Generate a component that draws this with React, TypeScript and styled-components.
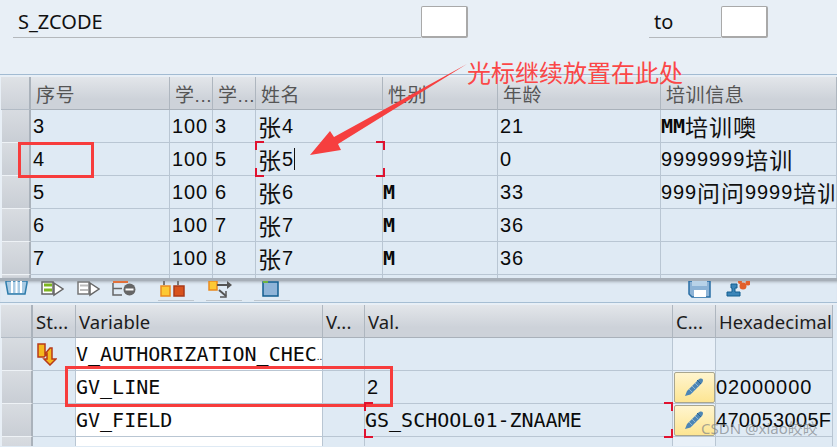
import React from "react";
import styled, { createGlobalStyle } from "styled-components";

const GlobalStyle = createGlobalStyle`
html, body {
  margin: 0;
  padding: 0;
  background: #dfeaf4;
}
`;

const sans = `"Liberation Sans", "Noto Sans CJK SC", sans-serif`;
const mono = `"DejaVu Sans Mono", "Noto Sans CJK SC", monospace`;
const label = `"Noto Sans", "Noto Sans CJK SC", sans-serif`;

const topCols = "31px 139px 43px 43px 127px 115px 163px 176px";
const bottomCols = "33px 43px 247px 42px 308px 43px 117px 4px";

const topRows = [
  ["3", "3", "张", "4", "", "21", "MM", "培训噢"],
  ["4", "5", "张", "5", "", "0", "9999999", "培训"],
  ["5", "6", "张", "6", "M", "33", "999", "问问", "9999", "培训"],
  ["6", "7", "张", "7", "M", "36"],
  ["7", "8", "张", "7", "M", "36"],
];

const App = () => {
  return (
    <>
      <GlobalStyle />
      <Page>
        <FilterBar>
          <FieldLabel $width={408} $pad={5}>S_ZCODE</FieldLabel>
          <FieldInput />
          <FieldLabel $width={72} $pad={5} $left={181}>to</FieldLabel>
          <FieldInput />
        </FilterBar>

        <TopTable>
          <HeadRow $cols={topCols}>
            <Corner />
            <HeadHan>序号</HeadHan>
            <HeadHan>学...</HeadHan>
            <HeadHan>学...</HeadHan>
            <HeadHan>姓名</HeadHan>
            <HeadHan>性别</HeadHan>
            <HeadHan>年龄</HeadHan>
            <HeadHan>培训信息</HeadHan>
          </HeadRow>
          {topRows.map((r) => (
            <Row key={r[0]} $cols={topCols}>
              <RowHead />
              <Cell><Digits>{r[0]}</Digits></Cell>
              <Cell><Digits>100</Digits></Cell>
              <Cell><Digits>{r[1]}</Digits></Cell>
              <Cell>
                <Han>{r[2]}</Han>
                <Digits>{r[3]}</Digits>
                {r[0] === "4" && <Caret />}
              </Cell>
              <Cell $flush><Bold>{r[4]}</Bold></Cell>
              <Cell><Digits>{r[5]}</Digits></Cell>
              <Cell $flush>
                {r[0] === "3" && <><Bold>{r[6]}</Bold><Han>{r[7]}</Han></>}
                {r[0] === "4" && <><Digits>{r[6]}</Digits><Han>{r[7]}</Han></>}
                {r[0] === "5" && (
                  <>
                    <Digits>{r[6]}</Digits>
                    <Han>{r[7]}</Han>
                    <Digits>{r[8]}</Digits>
                    <Han>{r[9]}</Han>
                  </>
                )}
              </Cell>
            </Row>
          ))}
          <StubRow $cols={topCols}>
            <RowHead />
            <Cell /><Cell /><Cell /><Cell /><Cell /><Cell /><Cell />
          </StubRow>
        </TopTable>

        <Toolbar>
          <Tool $left={5} width="23" height="19" viewBox="0 0 23 19">
            <path d="M1 0h21v2l-2 11H3L1 2z" fill="#a9cbe4" stroke="#2e7cab" strokeWidth="1.5" />
            <path d="M7 0v12M11.500 0v12M16 0v12" stroke="#fff" strokeWidth="2" />
          </Tool>
          <Tool $left={13} width="23" height="19" viewBox="0 0 23 19">
            <path d="M1 1h11v12H1z" fill="#fff" stroke="#666" strokeWidth="1.5" />
            <path d="M3 2.500h8v3H3zM3 7.500h8v3H3z" fill="#7db51f" />
            <path d="M13 2l9 6-9 6z" fill="#fff" stroke="#666" strokeWidth="1.5" />
          </Tool>
          <Tool $left={13} width="23" height="19" viewBox="0 0 23 19">
            <path d="M1 1h11v12H1z" fill="#fff" stroke="#777" strokeWidth="1.5" />
            <path d="M3 3.500h8v2H3zM3 8h8v2H3z" fill="#bbb" />
            <path d="M13 2l9 6-9 6z" fill="#fff" stroke="#666" strokeWidth="1.5" />
          </Tool>
          <Tool $left={12} width="24" height="19" viewBox="0 0 24 19">
            <path d="M1 1h15" stroke="#e2703a" strokeWidth="2" />
            <path d="M1 2v12h9M1 7.500h9" fill="none" stroke="#666" strokeWidth="1.500" />
            <circle cx="17.500" cy="8.500" r="6" fill="#666" />
            <path d="M13.500 8.500h8" stroke="#fff" strokeWidth="2" />
          </Tool>
          <ToolGroup $left={22} $pad={2}>
            <Tool width="25" height="19" viewBox="0 0 25 19">
              <path d="M4 0v4M18 0v4" stroke="#777" strokeWidth="2" />
              <path d="M1 5h9v10H1z" fill="#fcc935" stroke="#ea8a1e" strokeWidth="1.500" />
              <path d="M14 5h10v10H14z" fill="#d8521c" stroke="#a93a18" strokeWidth="1.500" />
            </Tool>
          </ToolGroup>
          <ToolGroup $left={12} $pad={2}>
            <Tool width="25" height="19" viewBox="0 0 25 19">
              <path d="M1 0h8v9H1z" fill="#fcc935" stroke="#ea8a1e" strokeWidth="1.500" />
              <path d="M9 4h11" stroke="#555" strokeWidth="2" />
              <path d="M19 0l5 4-5 4z" fill="#555" />
              <path d="M11 9l7 6" stroke="#555" strokeWidth="2" />
              <path d="M18 10v6h-6" fill="none" stroke="#555" strokeWidth="1.500" />
            </Tool>
          </ToolGroup>
          <ToolGroup $left={12} $pad={8}>
            <Tool width="17" height="19" viewBox="0 0 17 19">
              <path d="M1 1h15v14H1z" fill="#8fb4d8" stroke="#135e90" strokeWidth="1.500" />
              <path d="M1 0h5v2H1z" fill="#6db33f" />
            </Tool>
          </ToolGroup>
          <Tool $left={398} width="23" height="19" viewBox="0 0 23 19">
            <path d="M1 0h21v16H4l-3-3z" fill="#8db3d6" stroke="#2a6fa5" strokeWidth="1.500" />
            <path d="M6 9h12v7H6z" fill="#fff" />
            <path d="M4 0h15v5H4z" fill="#b8d2e8" />
          </Tool>
          <Tool $left={14} width="25" height="19" viewBox="0 0 25 19">
            <path d="M6 3h6v4h-2v4h5v4H2v-4h5V7H6z" fill="#3b85b8" stroke="#135e90" strokeWidth="1" />
            <circle cx="18" cy="5" r="3.500" fill="#e2602c" />
            <circle cx="23" cy="2" r="2.500" fill="#e2602c" />
            <circle cx="15" cy="1" r="2" fill="#e2602c" />
          </Tool>
        </Toolbar>

        <BottomTable>
          <HeadRow $cols={bottomCols}>
            <Corner />
            <HeadText>St...</HeadText>
            <HeadText>Variable</HeadText>
            <HeadText>V...</HeadText>
            <HeadText>Val.</HeadText>
            <HeadText>C...</HeadText>
            <HeadText>Hexadecimal</HeadText>
            <Gutter />
          </HeadRow>

          <Row $cols={bottomCols}>
            <RowHead />
            <Cell>
              <StatusIcon width="20" height="23" viewBox="0 0 20 23">
                <path d="M1 1h7v10l5-6h2v11h4l-6 6-6-6h3v-5l-3 3H1z" fill="#f5b81e" stroke="#b83a1a" strokeWidth="1.500" />
              </StatusIcon>
            </Cell>
            <Cell $fill="#fff" $flush><Mono>V_AUTHORIZATION_CHEC</Mono><Dots>..</Dots></Cell>
            <Cell />
            <Cell />
            <Cell $fill="#e8f0f8" />
            <Cell />
            <Gutter />
          </Row>

          <Row $cols={bottomCols}>
            <RowHead />
            <Cell />
            <Cell $fill="#fff" $flush><Mono>GV_LINE</Mono></Cell>
            <Cell />
            <Cell><Digits>2</Digits></Cell>
            <Cell $fill="#e8f0f8" $center><Pencil /></Cell>
            <Cell $flush><Digits>02000000</Digits></Cell>
            <Gutter />
          </Row>

          <Row $cols={bottomCols}>
            <RowHead />
            <Cell />
            <Cell $fill="#fff" $flush><Mono>GV_FIELD</Mono></Cell>
            <Cell />
            <Cell $flush><Mono>GS_SCHOOL01-ZNAAME</Mono></Cell>
            <Cell $fill="#e8f0f8" $center><Pencil /></Cell>
            <Cell $flush><Digits $tight>470053005F</Digits></Cell>
            <Gutter />
          </Row>

          <Row $cols={bottomCols}>
            <RowHead />
            <Cell />
            <Cell $fill="#fff" />
            <Cell />
            <Cell />
            <Cell $fill="#e8f0f8" />
            <Cell />
            <Gutter />
          </Row>
        </BottomTable>

        <RedBox $x={18} $y={142} $w={76} $h={36} />
        <RedBox $x={65} $y={366} $w={328} $h={41} />

        <Focus $x={255} $y={141} $w={130} $h={36} />
        <Focus $x={364} $y={402} $w={309} $h={36} />

        <Arrow width="837" height="447" viewBox="0 0 837 447">
          <path d="M467 64L338 144l3 6-31 5 20-24 4 6z" fill="#f63f3f" />
        </Arrow>
        <Note>光标继续放置在此处</Note>
        <Watermark>CSDN @xiao皎皎</Watermark>
      </Page>
    </>
  );
};

const Pencil = () => (
  <PencilButton>
    <svg width="24" height="24" viewBox="0 0 24 24">
      <path d="M5 16L16 5c2-2 4-1.500 4.500-1s1 2.500-1 4.500L8.500 19.500 3 21z" fill="#4d86b5" />
      <path d="M7 14l4 4M10 11l4 4M13 8l4 4" stroke="#8db4d4" strokeWidth="1" />
      <path d="M15 5l4 4" stroke="#2a6290" strokeWidth="1" />
    </svg>
  </PencilButton>
);

export default App;

const Watermark = styled.div`
position: absolute;
left: 701px;
top: 418px;
font-family: ${label};
font-size: 15px;
line-height: 20px;
color: rgba(120, 125, 130, 0.65);
white-space: nowrap;
`;

const Note = styled.div`
position: absolute;
left: 467px;
top: 60px;
font-family: ${sans};
font-size: 24px;
line-height: 28px;
color: #fb4747;
white-space: nowrap;
`;

const Arrow = styled.svg`
position: absolute;
left: 0;
top: 0;
pointer-events: none;
`;

const RedBox = styled.div<{ $x: number; $y: number; $w: number; $h: number }>`
position: absolute;
left: ${(p) => p.$x}px;
top: ${(p) => p.$y}px;
width: ${(p) => p.$w}px;
height: ${(p) => p.$h}px;
box-sizing: border-box;
border: 3px solid #f73c3c;
`;

const Focus = styled.div<{ $x: number; $y: number; $w: number; $h: number }>`
position: absolute;
left: ${(p) => p.$x}px;
top: ${(p) => p.$y}px;
width: ${(p) => p.$w}px;
height: ${(p) => p.$h}px;
background:
  linear-gradient(#e0122f, #e0122f) left top / 9px 2px no-repeat,
  linear-gradient(#e0122f, #e0122f) left top / 2px 9px no-repeat,
  linear-gradient(#e0122f, #e0122f) right top / 9px 2px no-repeat,
  linear-gradient(#e0122f, #e0122f) right top / 2px 9px no-repeat,
  linear-gradient(#e0122f, #e0122f) left bottom / 9px 2px no-repeat,
  linear-gradient(#e0122f, #e0122f) left bottom / 2px 9px no-repeat,
  linear-gradient(#e0122f, #e0122f) right bottom / 9px 2px no-repeat,
  linear-gradient(#e0122f, #e0122f) right bottom / 2px 9px no-repeat;
`;

const PencilButton = styled.div`
width: 41px;
height: 31px;
box-sizing: border-box;
display: flex;
align-items: center;
justify-content: center;
border: 1px solid #a9a68e;
border-radius: 2px;
background: linear-gradient(#fff5cf, #fde592);
`;

const StatusIcon = styled.svg`
flex: none;
margin-left: 2px;
`;

const Gutter = styled.div`
background-color: #dfeaf4;
`;

const Caret = styled.span`
width: 1px;
height: 22px;
background-color: #111;
`;

const Dots = styled.span`
font-family: ${sans};
font-size: 10px;
align-self: flex-end;
margin-bottom: 8px;
color: #111;
`;

const Mono = styled.span`
font-family: ${mono};
font-size: 20px;
color: #0a0a0a;
white-space: nowrap;
`;

const Bold = styled.span`
font-family: ${mono};
font-size: 20px;
font-weight: 700;
color: #0a0a0a;
`;

const Han = styled.span`
font-family: ${sans};
font-size: 23px;
letter-spacing: 1px;
color: #111;
white-space: nowrap;
`;

const Digits = styled.span<{ $tight?: boolean }>`
font-family: ${sans};
font-size: 20px;
letter-spacing: ${(p) => (p.$tight ? 0.3 : 0.9)}px;
color: #0a0a0a;
white-space: nowrap;
`;

const Cell = styled.div<{ $fill?: string; $center?: boolean; $flush?: boolean }>`
box-sizing: border-box;
display: flex;
align-items: center;
justify-content: ${(p) => (p.$center ? "center" : "flex-start")};
padding-left: ${(p) => (p.$center || p.$flush ? 0 : 2)}px;
min-width: 0;
overflow: hidden;
background-color: ${(p) => p.$fill || "#dfeaf4"};
border-right: 1px solid #b9c6d3;
border-bottom: 1px solid #b9c6d3;
`;

const RowHead = styled.div`
box-sizing: border-box;
margin-left: 2px;
background: linear-gradient(#d8dce1, #c9ced5);
border-right: 2px solid #aab2bb;
border-bottom: 1px solid #eef2f6;
`;

const Corner = styled.div`
box-sizing: border-box;
margin-left: 1px;
background: linear-gradient(#dfe2e6, #ccd1d8);
border-right: 2px solid #aab2bb;
border-bottom: 1px solid #b2bbc5;
`;

const HeadBase = styled.div`
box-sizing: border-box;
display: flex;
align-items: center;
padding-left: 5px;
overflow: hidden;
white-space: nowrap;
background: linear-gradient(#e3e6ea, #cdd2d9 70%);
border-right: 1px solid #aeb6bf;
border-bottom: 1px solid #a9b1ba;
`;

const HeadHan = styled(HeadBase)`
font-family: ${sans};
font-size: 19px;
letter-spacing: 0.6px;
color: #555;
`;

const HeadText = styled(HeadBase)`
padding-left: 3px;
font-family: ${label};
font-size: 18.5px;
letter-spacing: 0.1px;
color: #1c1c1c;
`;

const StubRow = styled.div<{ $cols: string }>`
display: grid;
grid-template-columns: ${(p) => p.$cols};
height: 4px;
overflow: hidden;
`;

const Row = styled.div<{ $cols: string }>`
display: grid;
grid-template-columns: ${(p) => p.$cols};
height: 33px;
`;

const HeadRow = styled.div<{ $cols: string }>`
display: grid;
grid-template-columns: ${(p) => p.$cols};
height: 33px;
`;

const BottomTable = styled.div`
padding-top: 2px;
background-color: #e8eff6;
border-top: 1px solid #a6bed3;
height: 144px;
overflow: hidden;
box-sizing: border-box;
`;

const Tool = styled.svg<{ $left?: number }>`
flex: none;
margin-left: ${(p) => p.$left || 0}px;
overflow: hidden;
`;

const ToolGroup = styled.div<{ $left: number; $pad: number }>`
flex: none;
width: 36px;
height: 20px;
box-sizing: border-box;
margin-left: ${(p) => p.$left}px;
padding-left: ${(p) => p.$pad}px;
border-bottom: 1px solid #bfc7cf;
`;

const Toolbar = styled.div`
display: flex;
align-items: flex-start;
height: 21px;
background-color: #dfeaf4;
box-shadow: inset 0 3px 3px -2px #a7afb8;
`;

const TopTable = styled.div`
padding-top: 2px;
height: 207px;
box-sizing: border-box;
overflow: hidden;
background-color: #e8eff6;
border-top: 1px solid #a2bbd2;
border-bottom: 3px solid #a7afb8;
`;

const FieldInput = styled.div`
width: 47px;
height: 32px;
box-sizing: border-box;
background-color: #fff;
border: 1px solid #a9a9a9;
border-bottom-width: 2px;
border-right-width: 2px;
border-radius: 2px;
`;

const FieldLabel = styled.div<{ $width: number; $pad: number; $left?: number }>`
width: ${(p) => p.$width}px;
height: 32px;
box-sizing: border-box;
margin-left: ${(p) => p.$left || 0}px;
padding-left: ${(p) => p.$pad}px;
display: flex;
align-items: center;
font-family: ${label};
font-size: 20px;
color: #111;
border-bottom: 1px solid #b4b8bc;
`;

const FilterBar = styled.div`
height: 74px;
box-sizing: border-box;
padding: 6px 0 0 13px;
display: flex;
align-items: flex-start;
background-color: #e8eff6;
`;

const Page = styled.div`
position: relative;
width: 837px;
height: 447px;
overflow: hidden;
background-color: #dfeaf4;
`;
